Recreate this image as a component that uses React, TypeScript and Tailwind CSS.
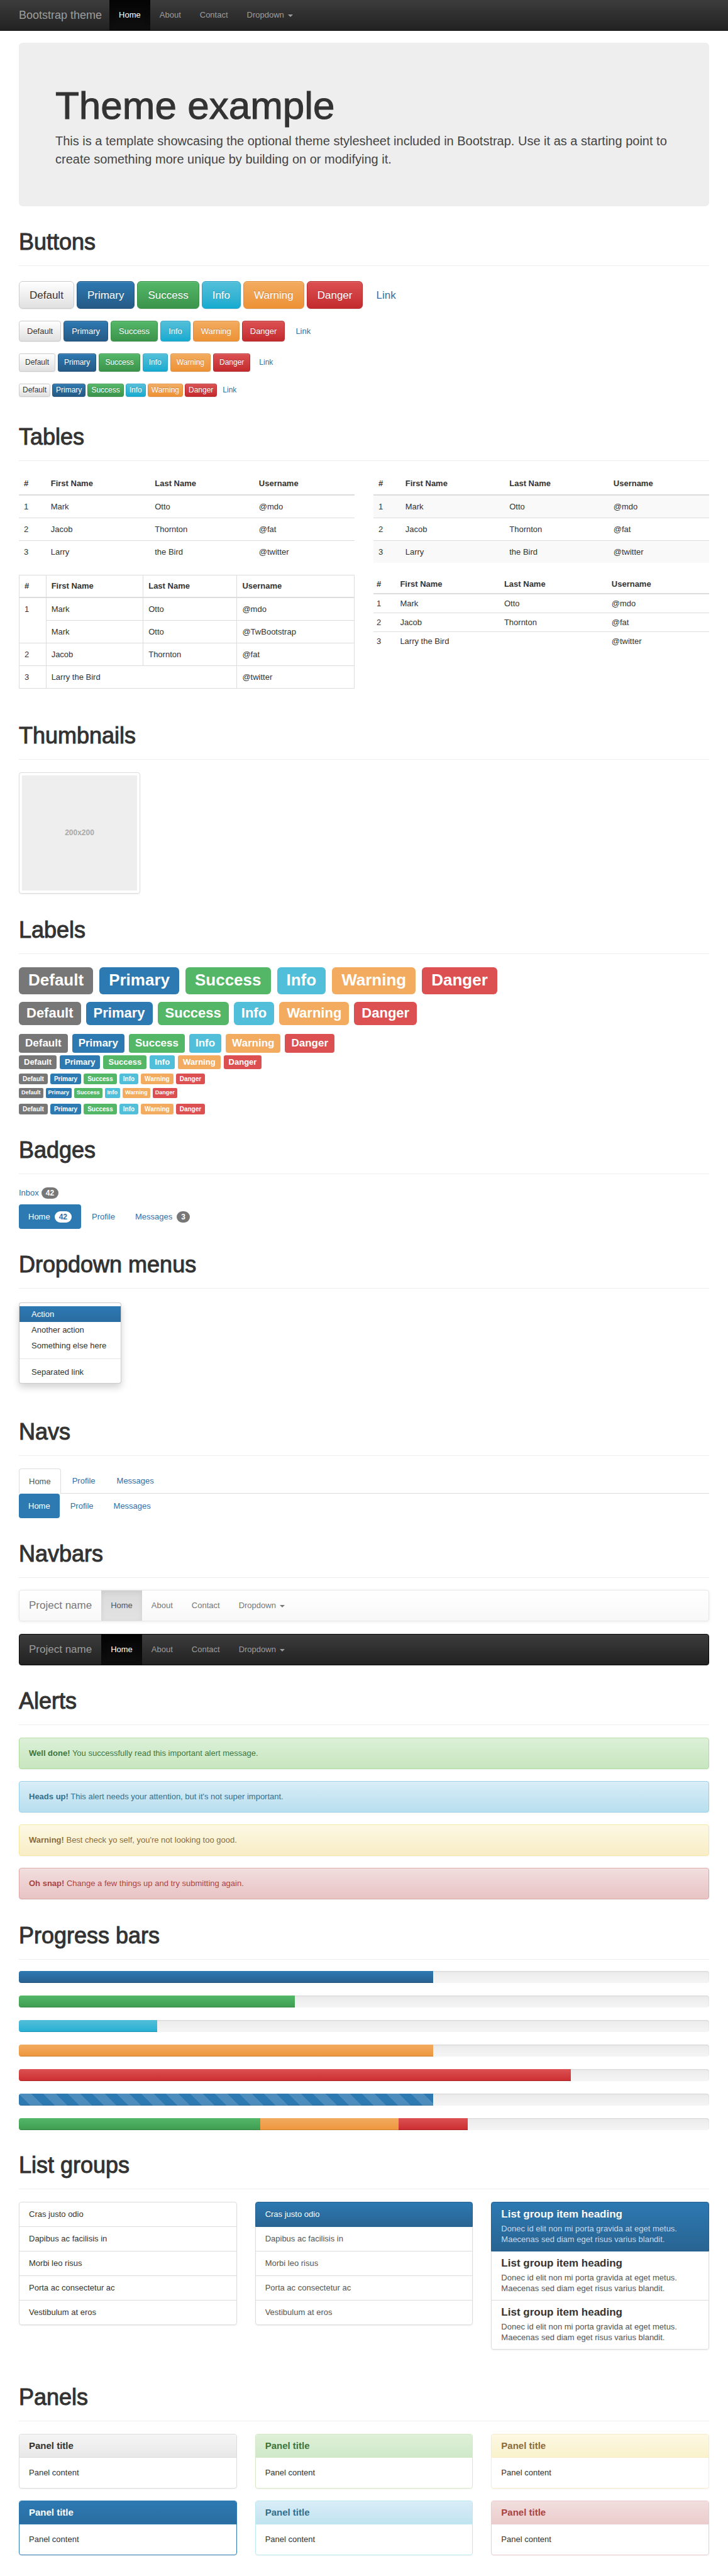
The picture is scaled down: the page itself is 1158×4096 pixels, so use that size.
import React from "react";

type Tone = "default" | "primary" | "success" | "info" | "warning" | "danger";

const tones: { tone: Tone; name: string }[] = [
  { tone: "default", name: "Default" },
  { tone: "primary", name: "Primary" },
  { tone: "success", name: "Success" },
  { tone: "info", name: "Info" },
  { tone: "warning", name: "Warning" },
  { tone: "danger", name: "Danger" },
];

function PageHeader({ children }: { children: React.ReactNode }) {
  return (
    <div className="border-b border-[#eee] pb-[18px]">
      <h1 className="text-[36px] leading-[38px] font-medium text-[#333] [-webkit-text-stroke:1px_#333]">
        {children}
      </h1>
    </div>
  );
}

function Caret() {
  return (
    <span
      aria-hidden="true"
      className="ml-1.5 inline-block border-x-4 border-t-4 border-x-transparent border-t-current align-middle"
    />
  );
}

/* ---------- Navbars ---------- */

function NavLinks({ dark }: { dark: boolean }) {
  const idle = dark ? "text-[#9d9d9d]" : "text-[#777]";
  const active = dark
    ? "text-white bg-linear-to-b from-[#050505] to-[#0f0f0f] shadow-[inset_0_3px_9px_rgba(0,0,0,0.25)]"
    : "text-[#555] bg-linear-to-b from-[#dbdbdb] to-[#e2e2e2] shadow-[inset_0_3px_9px_rgba(0,0,0,0.075)]";
  return (
    <ul className="flex">
      <li>
        <a href="#home" className={`block px-[15px] py-[15px] leading-[18px] ${active}`}>
          Home
        </a>
      </li>
      <li>
        <a href="#about" className={`block px-[15px] py-[15px] leading-[18px] ${idle}`}>
          About
        </a>
      </li>
      <li>
        <a href="#contact" className={`block px-[15px] py-[15px] leading-[18px] ${idle}`}>
          Contact
        </a>
      </li>
      <li>
        <button type="button" className={`block px-[15px] py-[15px] leading-[18px] ${idle}`}>
          Dropdown
          <Caret />
        </button>
      </li>
    </ul>
  );
}

/* ---------- Buttons ---------- */

const buttonTone: Record<Tone, string> = {
  default:
    "border-[#ccc] bg-linear-to-b from-white to-[#e0e0e0] text-[#333] [text-shadow:0_1px_0_#fff]",
  primary:
    "border-[#245580] bg-linear-to-b from-[#2d79b2] to-[#255a85] text-white [text-shadow:0_-1px_0_rgba(0,0,0,0.2)]",
  success:
    "border-[#3b9149] bg-linear-to-b from-[#54b768] to-[#3b944b] text-white [text-shadow:0_-1px_0_rgba(0,0,0,0.2)]",
  info: "border-[#28a4c9] bg-linear-to-b from-[#51bfd9] to-[#12abd0] text-white [text-shadow:0_-1px_0_rgba(0,0,0,0.2)]",
  warning:
    "border-[#e38d3b] bg-linear-to-b from-[#f2ab5f] to-[#ed9235] text-white [text-shadow:0_-1px_0_rgba(0,0,0,0.2)]",
  danger:
    "border-[#b92c30] bg-linear-to-b from-[#dc5052] to-[#c32a2e] text-white [text-shadow:0_-1px_0_rgba(0,0,0,0.2)]",
};

const buttonSizes = [
  { row: "gap-1", button: "h-11 px-4 text-[17px] rounded-md" },
  { row: "gap-1", button: "h-[33px] px-3 text-[13px] rounded" },
  { row: "gap-1", button: "h-[29px] px-[9px] text-[12px] rounded-[3px]" },
  { row: "gap-[3px]", button: "h-[21px] px-[5px] text-[12px] rounded-[3px]" },
];

function ButtonRow({ row, button }: { row: string; button: string }) {
  return (
    <div className={`flex ${row}`}>
      {tones.map(({ tone, name }) => (
        <button
          key={tone}
          type="button"
          className={`flex items-center border shadow-[inset_0_1px_0_rgba(255,255,255,0.15),0_1px_1px_rgba(0,0,0,0.075)] ${button} ${buttonTone[tone]}`}
        >
          {name}
        </button>
      ))}
      <button
        type="button"
        className={`flex items-center border border-transparent text-[#3071a9] ${button}`}
      >
        Link
      </button>
    </div>
  );
}

/* ---------- Tables ---------- */

function Columns({ widths }: { widths: string[] }) {
  return (
    <colgroup>
      {widths.map((w, i) => (
        <col key={i} className={w} />
      ))}
    </colgroup>
  );
}

function HeadRow({ cell }: { cell: string }) {
  return (
    <thead>
      <tr>
        {["#", "First Name", "Last Name", "Username"].map((t) => (
          <th key={t} scope="col" className={`text-left font-bold ${cell}`}>
            {t}
          </th>
        ))}
      </tr>
    </thead>
  );
}

function PeopleTable({ striped }: { striped: boolean }) {
  const rows = [
    ["1", "Mark", "Otto", "@mdo"],
    ["2", "Jacob", "Thornton", "@fat"],
    ["3", "Larry", "the Bird", "@twitter"],
  ];
  return (
    <table className="w-full table-fixed">
      <Columns widths={["w-[8%]", "w-[31%]", "w-[31%]", "w-[30%]"]} />
      <HeadRow cell="border-b-2 border-[#ddd] p-2 leading-[18px]" />
      <tbody>
        {rows.map((row) => (
          <tr key={row[0]} className={striped ? "odd:bg-[#f9f9f9]" : ""}>
            {row.map((c) => (
              <td key={c} className="border-t border-[#ddd] p-2 leading-[19px]">
                {c}
              </td>
            ))}
          </tr>
        ))}
      </tbody>
    </table>
  );
}

function BorderedTable() {
  const td = "border border-[#ddd] p-2 leading-[19px] align-top";
  return (
    <table className="w-full table-fixed border border-[#ddd]">
      <Columns widths={["w-[8%]", "w-[29%]", "w-[28%]", "w-[35%]"]} />
      <HeadRow cell="border border-b-2 border-[#ddd] p-2 leading-[18px]" />
      <tbody>
        <tr>
          <td rowSpan={2} className={td}>1</td>
          <td className={td}>Mark</td>
          <td className={td}>Otto</td>
          <td className={td}>@mdo</td>
        </tr>
        <tr>
          <td className={td}>Mark</td>
          <td className={td}>Otto</td>
          <td className={td}>@TwBootstrap</td>
        </tr>
        <tr>
          <td className={td}>2</td>
          <td className={td}>Jacob</td>
          <td className={td}>Thornton</td>
          <td className={td}>@fat</td>
        </tr>
        <tr>
          <td className={td}>3</td>
          <td colSpan={2} className={td}>Larry the Bird</td>
          <td className={td}>@twitter</td>
        </tr>
      </tbody>
    </table>
  );
}

function CondensedTable() {
  const td = "border-t border-[#ddd] p-[5px] leading-[19px]";
  return (
    <table className="w-full table-fixed">
      <Columns widths={["w-[7%]", "w-[31%]", "w-[32%]", "w-[30%]"]} />
      <HeadRow cell="border-b-2 border-[#ddd] p-[5px] leading-[19px]" />
      <tbody>
        <tr>
          <td className={td}>1</td>
          <td className={td}>Mark</td>
          <td className={td}>Otto</td>
          <td className={td}>@mdo</td>
        </tr>
        <tr>
          <td className={td}>2</td>
          <td className={td}>Jacob</td>
          <td className={td}>Thornton</td>
          <td className={td}>@fat</td>
        </tr>
        <tr>
          <td className={td}>3</td>
          <td colSpan={2} className={td}>Larry the Bird</td>
          <td className={td}>@twitter</td>
        </tr>
      </tbody>
    </table>
  );
}

/* ---------- Labels and badges ---------- */

const labelTone: Record<Tone, string> = {
  default: "bg-[#777]",
  primary: "bg-[#2d79b2]",
  success: "bg-[#54b768]",
  info: "bg-[#51bfd9]",
  warning: "bg-[#f2ab5f]",
  danger: "bg-[#dc5052]",
};

const labelRows = [
  { row: "gap-2.5", label: "h-[43px] px-[15px] pb-[3px] text-[26px] rounded-md" },
  { row: "gap-2 mt-3", label: "h-[37px] px-3 pb-0.5 text-[22px] rounded-md" },
  { row: "gap-[7px] mt-3.5", label: "h-[30px] px-2.5 pb-0.5 text-[17px] rounded" },
  { row: "gap-[5px] mt-1", label: "h-[22px] px-2 pb-px text-[13px] rounded-[3px]" },
  { row: "gap-1 mt-[7px]", label: "h-[17px] px-1.5 pb-px text-[10px] rounded-[3px]" },
  { row: "gap-1 mt-1.5", label: "h-4 px-1 pb-px text-[9px] rounded-[2px]" },
  { row: "gap-1 mt-[9px]", label: "h-[17px] px-1.5 pb-px text-[10px] rounded-[3px]" },
];

function Badge({ light, children }: { light?: boolean; children: React.ReactNode }) {
  return (
    <span
      className={`rounded-[9px] px-[7px] py-[3px] text-[12px] leading-[12px] font-bold ${
        light ? "bg-white text-[#3071a9]" : "bg-[#777] text-white"
      }`}
    >
      {children}
    </span>
  );
}

const pill = "flex items-center gap-[7px] rounded px-[15px] py-2.5 leading-[19px]";
const pillActive = `${pill} bg-[#2d79b2] text-white`;
const pillIdle = `${pill} text-[#3071a9]`;

/* ---------- Alerts ---------- */

const alerts = [
  {
    title: "Well done!",
    text: "You successfully read this important alert message.",
    style: "border-[#b2dba1] from-[#dcf0d8] to-[#c7e6be] text-[#3c763d]",
  },
  {
    title: "Heads up!",
    text: "This alert needs your attention, but it's not super important.",
    style: "border-[#9acfea] from-[#d8edf7] to-[#b8dfee] text-[#31708f]",
  },
  {
    title: "Warning!",
    text: "Best check yo self, you're not looking too good.",
    style: "border-[#f5e79e] from-[#fcf8e3] to-[#f8edc6] text-[#8a6d3b]",
  },
  {
    title: "Oh snap!",
    text: "Change a few things up and try submitting again.",
    style: "border-[#dca7a7] from-[#f2dede] to-[#e8c3c4] text-[#a94442]",
  },
];

/* ---------- Progress bars ---------- */

const barTone = {
  primary: "bg-linear-to-b from-[#2d79b2] to-[#28608f]",
  success: "bg-linear-to-b from-[#54b768] to-[#3e9c50]",
  info: "bg-linear-to-b from-[#51bfd9] to-[#22afd3]",
  warning: "bg-linear-to-b from-[#f2ab5f] to-[#ee963c]",
  danger: "bg-linear-to-b from-[#dc5052] to-[#cb2c30]",
  striped:
    "bg-[#2d79b2] bg-[linear-gradient(45deg,rgba(255,255,255,0.15)_25%,transparent_25%,transparent_50%,rgba(255,255,255,0.15)_50%,rgba(255,255,255,0.15)_75%,transparent_75%,transparent)] bg-[length:39px_39px]",
};

const progressBars: { tone: keyof typeof barTone; value: number }[][] = [
  [{ tone: "primary", value: 60 }],
  [{ tone: "success", value: 40 }],
  [{ tone: "info", value: 20 }],
  [{ tone: "warning", value: 60 }],
  [{ tone: "danger", value: 80 }],
  [{ tone: "striped", value: 60 }],
  [
    { tone: "success", value: 35 },
    { tone: "warning", value: 20 },
    { tone: "danger", value: 10 },
  ],
];

/* ---------- List groups ---------- */

const listItems = [
  "Cras justo odio",
  "Dapibus ac facilisis in",
  "Morbi leo risus",
  "Porta ac consectetur ac",
  "Vestibulum at eros",
];

const activeItem =
  "relative border-[#286090] bg-linear-to-b from-[#2d79b2] to-[#286492] text-white [text-shadow:0_-1px_0_#286090]";
const listBox = "rounded shadow-[0_1px_2px_rgba(0,0,0,0.075)]";
const listItem = "-mt-px block border px-[15px] py-2.5 first:mt-0 first:rounded-t last:rounded-b";

/* ---------- Panels ---------- */

const panels = [
  { box: "border-[#ddd]", head: "border-[#ddd] from-[#f5f5f5] to-[#e8e8e8] text-[#333]" },
  { box: "border-[#d6e9c6]", head: "border-[#d6e9c6] from-[#dff0d8] to-[#cfe9c9] text-[#3c763d]" },
  { box: "border-[#faebcc]", head: "border-[#faebcc] from-[#fcf8e3] to-[#faf2cc] text-[#8a6d3b]" },
  { box: "border-[#2d79b2]", head: "border-[#2d79b2] from-[#2d79b2] to-[#2a6da1] text-white" },
  { box: "border-[#bce8f1]", head: "border-[#bce8f1] from-[#d9edf7] to-[#c1e3f0] text-[#31708f]" },
  { box: "border-[#ebccd1]", head: "border-[#ebccd1] from-[#f2dede] to-[#ebcccc] text-[#a94442]" },
];

export default function App() {
  return (
    <div className="min-h-screen bg-white pb-8 font-['Liberation_Sans',Arial,sans-serif] text-[13px] leading-[19px] text-[#333]">
      <nav className="flex flex-wrap border-b border-[#080808] bg-linear-to-b from-[#3c3c3c] to-[#222] px-[30px]">
        <a href="#top" className="py-[15px] pr-3 text-[18px] leading-[18px] text-[#9d9d9d]">
          Bootstrap theme
        </a>
        <NavLinks dark />
      </nav>

      <main className="px-[30px]">
        <div className="mt-[19px] mb-[38px] rounded-md bg-[#eee] px-[58px] pt-[69px] pb-[60px]">
          <h1 className="text-[62px] leading-[61px] font-medium [-webkit-text-stroke:1px_#333]">
            Theme example
          </h1>
          <p className="mt-3 text-[20px] leading-[29px] font-extralight text-[#444]">
            This is a template showcasing the optional theme stylesheet included in Bootstrap. Use it
            as a starting point to create something more unique by building on or modifying it.
          </p>
        </div>

        <section className="mb-[45px]">
          <PageHeader>Buttons</PageHeader>
          <div className="mt-6 flex flex-col gap-[19px]">
            {buttonSizes.map((size) => (
              <ButtonRow key={size.button} row={size.row} button={size.button} />
            ))}
          </div>
        </section>

        <section className="mb-14">
          <PageHeader>Tables</PageHeader>
          <div className="mt-[19px] grid grid-cols-2 gap-[30px]">
            <div className="flex flex-col gap-[19px]">
              <PeopleTable striped={false} />
              <BorderedTable />
            </div>
            <div className="flex flex-col gap-[19px]">
              <PeopleTable striped />
              <CondensedTable />
            </div>
          </div>
        </section>

        <section className="mb-[39px]">
          <PageHeader>Thumbnails</PageHeader>
          <div className="mt-5 size-[193px] rounded border border-[#ddd] p-1 shadow-[0_1px_2px_rgba(0,0,0,0.075)]">
            <div className="flex h-full items-center justify-center bg-[#eee] text-[12px] font-bold text-[#aaa]">
              200x200
            </div>
          </div>
        </section>

        <section className="mb-[38px]">
          <PageHeader>Labels</PageHeader>
          <div className="mt-[21px]">
            {labelRows.map(({ row, label }, i) => (
              <div key={i} className={`flex ${row}`}>
                {tones.map(({ tone, name }) => (
                  <span
                    key={tone}
                    className={`flex items-center font-bold text-white ${label} ${labelTone[tone]}`}
                  >
                    {name}
                  </span>
                ))}
              </div>
            ))}
          </div>
        </section>

        <section className="mb-[38px]">
          <PageHeader>Badges</PageHeader>
          <p className="mt-5 mb-[9px] flex items-center gap-1">
            <a href="#inbox" className="text-[#3071a9]">
              Inbox
            </a>
            <Badge>42</Badge>
          </p>
          <ul className="flex gap-0.5">
            <li>
              <a href="#home" className={pillActive}>
                Home <Badge light>42</Badge>
              </a>
            </li>
            <li>
              <a href="#profile" className={pillIdle}>
                Profile
              </a>
            </li>
            <li>
              <a href="#messages" className={pillIdle}>
                Messages <Badge>3</Badge>
              </a>
            </li>
          </ul>
        </section>

        <section className="mb-[58px]">
          <PageHeader>Dropdown menus</PageHeader>
          <ul className="mt-[22px] w-fit rounded border border-black/20 bg-white py-[5px] shadow-[0_6px_12px_rgba(0,0,0,0.175)]">
            <li>
              <a
                href="#action"
                className="block bg-linear-to-b from-[#2d79b2] to-[#2a6da1] px-[19px] py-[3px] text-white"
              >
                Action
              </a>
            </li>
            <li>
              <a href="#another" className="block px-[19px] py-[3px]">
                Another action
              </a>
            </li>
            <li>
              <a href="#something" className="block px-[19px] py-[3px] pr-[23px]">
                Something else here
              </a>
            </li>
            <li role="separator" className="my-2 h-px bg-[#e5e5e5]" />
            <li>
              <a href="#separated" className="block px-[19px] py-[3px]">
                Separated link
              </a>
            </li>
          </ul>
        </section>

        <section className="mb-[38px]">
          <PageHeader>Navs</PageHeader>
          <ul className="mt-5 flex gap-0.5 border-b border-[#ddd]">
            <li className="-mb-px">
              <a
                href="#home"
                className="block rounded-t border border-b-0 border-[#ddd] bg-white px-[15px] py-2.5 leading-[19px] text-[#555]"
              >
                Home
              </a>
            </li>
            <li>
              <a href="#profile" className="block px-4 py-2.5 leading-[19px] text-[#3071a9]">
                Profile
              </a>
            </li>
            <li>
              <a href="#messages" className="block px-4 py-2.5 leading-[19px] text-[#3071a9]">
                Messages
              </a>
            </li>
          </ul>
          <ul className="flex gap-0.5">
            <li>
              <a href="#home" className={pillActive}>
                Home
              </a>
            </li>
            <li>
              <a href="#profile" className={pillIdle}>
                Profile
              </a>
            </li>
            <li>
              <a href="#messages" className={pillIdle}>
                Messages
              </a>
            </li>
          </ul>
        </section>

        <section className="mb-[38px]">
          <PageHeader>Navbars</PageHeader>
          <nav className="mt-[19px] mb-5 flex flex-wrap rounded border border-[#e7e7e7] bg-linear-to-b from-white to-[#f8f8f8] shadow-[inset_0_1px_0_rgba(255,255,255,0.15),0_1px_5px_rgba(0,0,0,0.075)]">
            <a href="#project" className="px-[15px] py-[15px] text-[17px] leading-[18px] text-[#777]">
              Project name
            </a>
            <NavLinks dark={false} />
          </nav>
          <nav className="flex flex-wrap rounded border border-[#080808] bg-linear-to-b from-[#3c3c3c] to-[#222]">
            <a href="#project" className="px-[15px] py-[15px] text-[17px] leading-[18px] text-[#9d9d9d]">
              Project name
            </a>
            <NavLinks dark />
          </nav>
        </section>

        <section className="mb-[39px]">
          <PageHeader>Alerts</PageHeader>
          <div className="mt-5 flex flex-col gap-[19px]">
            {alerts.map((a) => (
              <div
                key={a.title}
                role="alert"
                className={`rounded border bg-linear-to-b px-[15px] py-3.5 leading-[20px] shadow-[inset_0_1px_0_rgba(255,255,255,0.25),0_1px_2px_rgba(0,0,0,0.05)] [text-shadow:0_1px_0_rgba(255,255,255,0.2)] ${a.style}`}
              >
                <strong className="font-bold">{a.title}</strong> {a.text}
              </div>
            ))}
          </div>
        </section>

        <section className="mb-[37px]">
          <PageHeader>Progress bars</PageHeader>
          <div className="mt-[18px] flex flex-col gap-5">
            {progressBars.map((bars, i) => (
              <div
                key={i}
                className="flex h-[19px] overflow-hidden rounded bg-linear-to-b from-[#ebebeb] to-[#f5f5f5] shadow-[inset_0_1px_2px_rgba(0,0,0,0.1)]"
              >
                {bars.map((b) => (
                  <div
                    key={b.tone}
                    role="progressbar"
                    aria-label={b.tone}
                    aria-valuenow={b.value}
                    aria-valuemin={0}
                    aria-valuemax={100}
                    className={`h-full shadow-[inset_0_-1px_0_rgba(0,0,0,0.15)] ${barTone[b.tone]}`}
                    style={{ width: `${b.value}%` }}
                  />
                ))}
              </div>
            ))}
          </div>
        </section>

        <section className="mb-[57px]">
          <PageHeader>List groups</PageHeader>
          <div className="mt-5 grid grid-cols-3 items-start gap-[29px]">
            <ul className={listBox}>
              {listItems.map((t) => (
                <li key={t} className={`${listItem} border-[#ddd] leading-[18px]`}>
                  {t}
                </li>
              ))}
            </ul>
            <div className={listBox}>
              {listItems.map((t, i) => (
                <a
                  key={t}
                  href="#item"
                  className={`${listItem} leading-[18px] ${i === 0 ? activeItem : "border-[#ddd] text-[#555]"}`}
                >
                  {t}
                </a>
              ))}
            </div>
            <div className={listBox}>
              {[0, 1, 2].map((i) => (
                <a
                  key={i}
                  href="#item"
                  className={`${listItem} ${i === 0 ? activeItem : "border-[#ddd] text-[#555]"}`}
                >
                  <h4
                    className={`mb-[5px] text-[17px] leading-[18px] font-bold ${i === 0 ? "text-white" : "text-[#333]"}`}
                  >
                    List group item heading
                  </h4>
                  <p className={`leading-[17px] ${i === 0 ? "text-[#c7ddef]" : ""}`}>
                    Donec id elit non mi porta gravida at eget metus. Maecenas sed diam eget risus
                    varius blandit.
                  </p>
                </a>
              ))}
            </div>
          </div>
        </section>

        <section>
          <PageHeader>Panels</PageHeader>
          <div className="mt-5 grid grid-cols-3 gap-x-[29px] gap-y-[19px]">
            {panels.map((p) => (
              <div
                key={p.box}
                className={`overflow-hidden rounded border shadow-[0_1px_2px_rgba(0,0,0,0.05)] ${p.box}`}
              >
                <div className={`border-b bg-linear-to-b px-[15px] py-[9px] ${p.head}`}>
                  <h3 className="text-[15px] leading-[18px] font-bold">Panel title</h3>
                </div>
                <div className="px-[15px] py-3.5 leading-[20px]">Panel content</div>
              </div>
            ))}
          </div>
        </section>
      </main>
    </div>
  );
}
